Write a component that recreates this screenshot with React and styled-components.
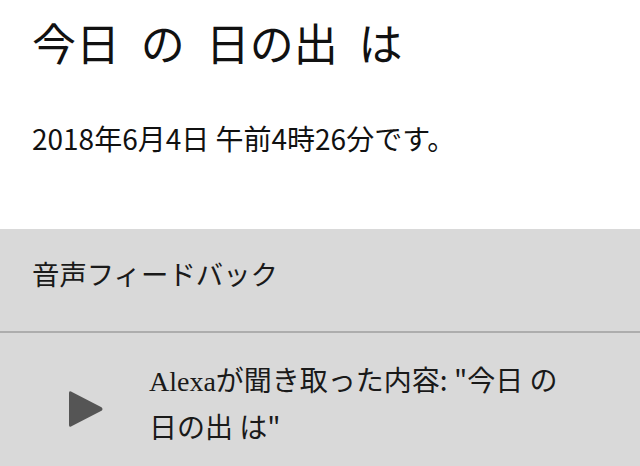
import React from "react";
import styled, { createGlobalStyle } from "styled-components";

const Global = createGlobalStyle`
  html, body { margin: 0; padding: 0; background: #ffffff; }
  body { font-family: "Noto Sans CJK JP", "Noto Sans", sans-serif; color: #111; }
`;

const Page = styled.div`
  width: 640px;
  height: 466px;
  display: flex;
  flex-direction: column;
  overflow: hidden;
`;

const Card = styled.section`
  height: 229px;
  box-sizing: border-box;
  padding: 10px 32px 0;
  background: #ffffff;
`;

const Title = styled.h1`
  margin: 0;
  font-weight: 400;
  font-size: 44px;
  line-height: 64px;
  word-spacing: 11px;
  color: #111;
`;

const Body = styled.p`
  margin: 46px 0 0;
  font-size: 28px;
  line-height: 36px;
  color: #111;
`;

const Feedback = styled.section`
  flex: 1;
  background: #d9d9d9;
  display: flex;
  flex-direction: column;
`;

const Header = styled.div`
  height: 104px;
  box-sizing: border-box;
  padding: 24px 32px 0;
  border-bottom: 2px solid #adadad;
  font-size: 27.4px;
  line-height: 40px;
  color: #1a1a1a;
`;

const Row = styled.div`
  display: flex;
  align-items: center;
  padding: 24px 32px 0 68px;
  gap: 45px;
`;

const PlayIcon = styled.svg`
  flex: none;
  width: 36px;
  height: 40px;
  margin-top: 12px;
`;

const Heard = styled.div`
  width: 420px;
  font-size: 28px;
  line-height: 45px;
  color: #1a1a1a;
`;

const Serif = styled.span`
  font-family: "Liberation Serif", "DejaVu Serif", serif;
  font-size: 28px;
`;

export default function App() {
  return (
    <Page>
      <Global />
      <Card>
        <Title>今日 の 日の出 は</Title>
        <Body>2018年6月4日 午前4時26分です。</Body>
      </Card>
      <Feedback>
        <Header>音声フィードバック</Header>
        <Row>
          <PlayIcon viewBox="0 0 36 40">
            <path
              d="M3 2.5 L33.5 18.2 Q35.5 20 33.5 21.8 L3 37.5 Q1 38.5 1 36 L1 4 Q1 1.5 3 2.5 Z"
              fill="#555555"
            />
          </PlayIcon>
          <Heard>
            <Serif>Alexa</Serif>が聞き取った内容: "今日 の 日の出 は"
          </Heard>
        </Row>
      </Feedback>
    </Page>
  );
}
